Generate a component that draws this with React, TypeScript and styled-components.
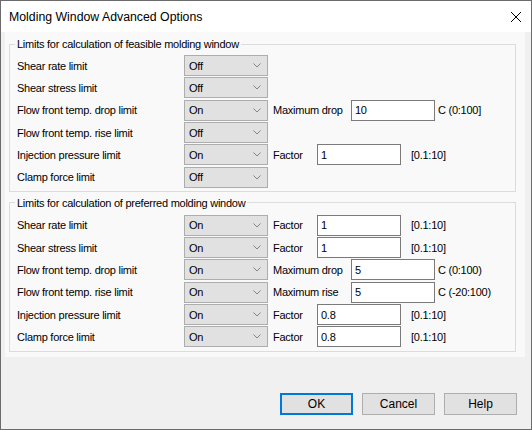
import React from "react"
import styled, { createGlobalStyle } from "styled-components"

const GlobalStyle = createGlobalStyle`
  html, body {
    margin: 0;
    padding: 0;
    background: #ffffff;
  }
  body {
    font-family: "Liberation Sans", Arial, sans-serif;
    font-size: 11px;
    letter-spacing: -0.25px;
    color: #000000;
  }
  * {
    box-sizing: border-box;
  }
`

// Whole dialog = title bar + option panel + button strip
const Window = styled.div`
  width: 532px;
  height: 430px;
  display: flex;
  flex-direction: column;
  border: 1px solid #6b6b6b;
  background: #f0f0f0;
`

const TitleBar = styled.div`
  flex: none;
  height: 31px;
  display: flex;
  align-items: center;
  justify-content: space-between;
  padding: 0 9px 0 8px;
  background: #ffffff;
  font-size: 12.3px;
  letter-spacing: 0;
`

const CloseIcon = () => (
  <svg width="12" height="12" viewBox="0 0 12 12">
    <path d="M1 1 L11 11 M11 1 L1 11" stroke="#000" strokeWidth="1" fill="none" />
  </svg>
)

const Panel = styled.div`
  flex: none;
  margin: 0 6px 0 4px;
  padding: 5px 9px 5px 4px;
  background: #f9f9f9;
  display: flex;
  flex-direction: column;
  gap: 4px;
`

const GroupBox = styled.fieldset`
  margin: 0;
  padding: ${(p: { $top: number; $bottom: number }) => `${p.$top}px 7px ${p.$bottom}px 7px`};
  border: 1px solid #dcdcdc;
  min-width: 0;
`

const Legend = styled.legend`
  padding: 0 2px;
  margin-left: -2px;
  line-height: 14px;
`

const Rows = styled.div`
  display: grid;
  grid-auto-rows: 21px;
  row-gap: 1.35px;
`

const Row = styled.div`
  display: grid;
  grid-template-columns: 167px 84px 1fr;
  align-items: center;
`

const Label = styled.span`
  white-space: nowrap;
`

const Select = styled.div`
  height: 21px;
  display: flex;
  align-items: center;
  justify-content: space-between;
  padding: 0 6px 0 4px;
  background: #e1e1e1;
  border: 1px solid #adadad;
`

const Chevron = () => (
  <svg width="8" height="5" viewBox="0 0 8 5">
    <polyline points="0.5,0.5 4,4 7.5,0.5" stroke="#7a7a7a" strokeWidth="0.9" fill="none" />
  </svg>
)

const Param = styled.div`
  display: flex;
  align-items: center;
  padding-left: 5px;
`

const ParamName = styled.span`
  width: ${(p: { $wide: boolean }) => (p.$wide ? 78 : 44)}px;
  white-space: nowrap;
`

const TextBox = styled.div`
  width: 84px;
  height: 21px;
  display: flex;
  align-items: center;
  padding-left: 3px;
  background: #ffffff;
  border: 1px solid #7a7a7a;
`

const Range = styled.span`
  margin-left: ${(p: { $wide: boolean }) => (p.$wide ? 3 : 10)}px;
  white-space: nowrap;
`

const Footer = styled.div`
  flex: 1;
  display: flex;
  align-items: flex-end;
  justify-content: flex-end;
  gap: 9px;
  padding: 0 14px 14px 0;
`

const Button = styled.div`
  width: 73px;
  height: 22px;
  display: flex;
  align-items: center;
  justify-content: center;
  background: #e1e1e1;
  border: ${(p: { $default?: boolean }) => (p.$default ? "2px solid #0078d7" : "1px solid #adadad")};
  font-size: 12px;
  letter-spacing: 0;
`

interface Limit {
  label: string
  value: string
  param?: { name: string; value: string; range: string }
}

const feasible: Limit[] = [
  { label: "Shear rate limit", value: "Off" },
  { label: "Shear stress limit", value: "Off" },
  {
    label: "Flow front temp. drop limit",
    value: "On",
    param: { name: "Maximum drop", value: "10", range: "C (0:100]" },
  },
  { label: "Flow front temp. rise limit", value: "Off" },
  {
    label: "Injection pressure limit",
    value: "On",
    param: { name: "Factor", value: "1", range: "[0.1:10]" },
  },
  { label: "Clamp force limit", value: "Off" },
]

const preferred: Limit[] = [
  {
    label: "Shear rate limit",
    value: "On",
    param: { name: "Factor", value: "1", range: "[0.1:10]" },
  },
  {
    label: "Shear stress limit",
    value: "On",
    param: { name: "Factor", value: "1", range: "[0.1:10]" },
  },
  {
    label: "Flow front temp. drop limit",
    value: "On",
    param: { name: "Maximum drop", value: "5", range: "C (0:100)" },
  },
  {
    label: "Flow front temp. rise limit",
    value: "On",
    param: { name: "Maximum rise", value: "5", range: "C (-20:100)" },
  },
  {
    label: "Injection pressure limit",
    value: "On",
    param: { name: "Factor", value: "0.8", range: "[0.1:10]" },
  },
  {
    label: "Clamp force limit",
    value: "On",
    param: { name: "Factor", value: "0.8", range: "[0.1:10]" },
  },
]

const LimitRow = ({ limit }: { limit: Limit }) => {
  const wide = limit.param ? limit.param.name !== "Factor" : false
  return (
    <Row>
      <Label>{limit.label}</Label>
      <Select>
        <span>{limit.value}</span>
        <Chevron />
      </Select>
      {limit.param && (
        <Param>
          <ParamName $wide={wide}>{limit.param.name}</ParamName>
          <TextBox>{limit.param.value}</TextBox>
          <Range $wide={wide}>{limit.param.range}</Range>
        </Param>
      )}
    </Row>
  )
}

export default function App() {
  return (
    <>
      <GlobalStyle />
      <Window>
        <TitleBar>
          <span>Molding Window Advanced Options</span>
          <CloseIcon />
        </TitleBar>
        <Panel>
          <GroupBox $top={4} $bottom={3}>
            <Legend>Limits for calculation of feasible molding window</Legend>
            <Rows>
              {feasible.map((l) => (
                <LimitRow key={l.label} limit={l} />
              ))}
            </Rows>
          </GroupBox>
          <GroupBox $top={5} $bottom={4}>
            <Legend>Limits for calculation of preferred molding window</Legend>
            <Rows>
              {preferred.map((l) => (
                <LimitRow key={l.label} limit={l} />
              ))}
            </Rows>
          </GroupBox>
        </Panel>
        <Footer>
          <Button $default>OK</Button>
          <Button>Cancel</Button>
          <Button>Help</Button>
        </Footer>
      </Window>
    </>
  )
}
